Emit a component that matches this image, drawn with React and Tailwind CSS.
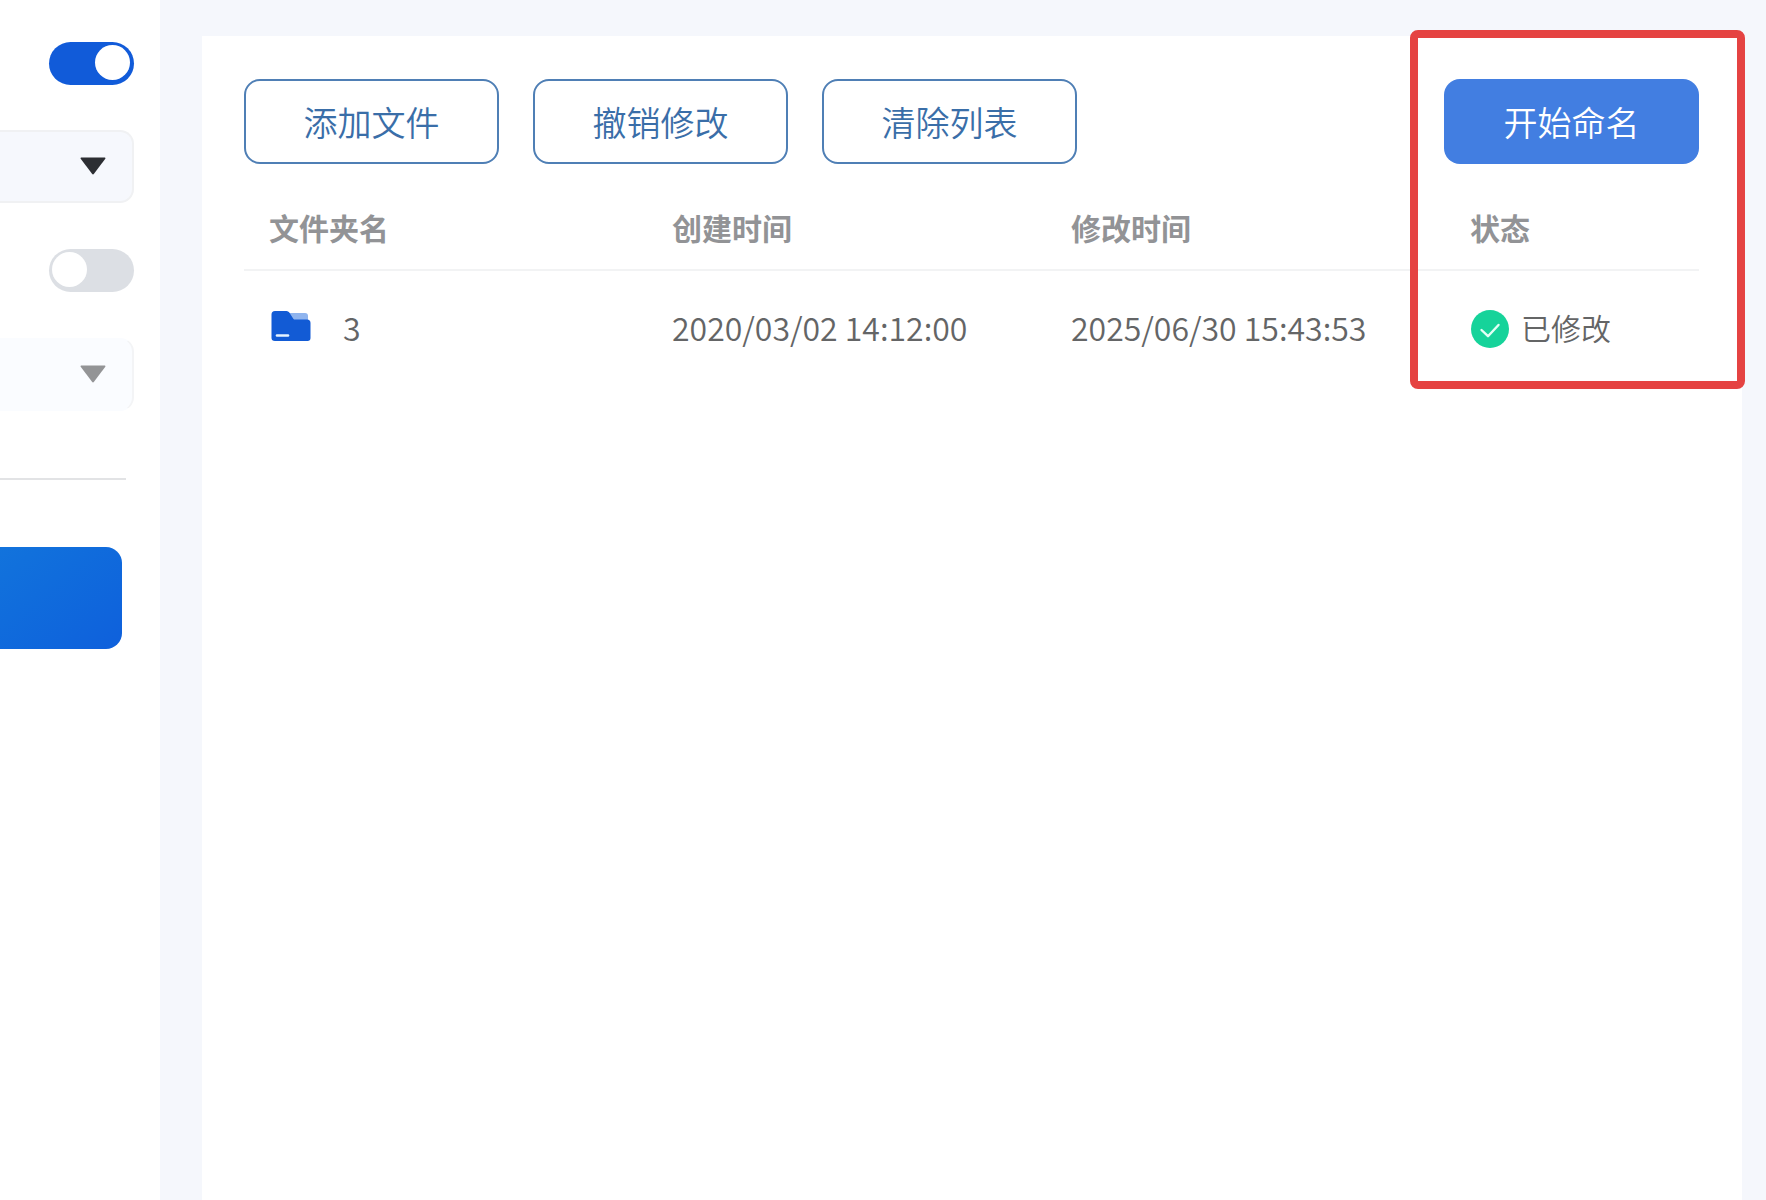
import React from "react";

function Toggle({ label, defaultChecked }) {
  return (
    <label className="relative block h-[43px] w-[85px]">
      <input
        type="checkbox"
        role="switch"
        aria-label={label}
        defaultChecked={defaultChecked}
        className="peer block h-full w-full appearance-none rounded-full bg-[#dcdfe4] checked:bg-[#115bd9]"
      />
      <span className="pointer-events-none absolute top-[3px] left-[3px] size-[35px] rounded-full bg-white peer-checked:left-[46px]" />
    </label>
  );
}

function Dropdown({ label, disabled }) {
  return (
    <div className="relative w-full">
      <select
        aria-label={label}
        disabled={disabled}
        className={
          disabled
            ? "block h-[73px] w-full appearance-none rounded-r-[14px] border-y border-r-2 border-y-[#fafcff] border-r-[#f3f4f6] bg-[#fafcff]"
            : "block h-[73px] w-full appearance-none rounded-r-[14px] border-2 border-l-0 border-[#f0f1f3] bg-[#f6f8fd]"
        }
      />
      <svg
        viewBox="0 0 26 18"
        className={
          disabled
            ? "pointer-events-none absolute top-[27px] right-7 h-[18px] w-[26px] text-[#939496]"
            : "pointer-events-none absolute top-[27px] right-7 h-[18px] w-[26px] text-[#2c2e33]"
        }
        aria-hidden="true"
      >
        <path d="M1.2 .5h23.6q1.2 .2 .5 1.3L14 16.8q-1 1.2-2 0L.7 1.8Q0 .7 1.2 .5Z" fill="currentColor" />
      </svg>
    </div>
  );
}

function OutlineButton({ children }) {
  return (
    <button
      type="button"
      className="h-[85px] w-[255px] rounded-2xl border-2 border-[#4f7fb5] bg-white text-[34px] leading-none font-[350] text-[#3a6ea8]"
    >
      {children}
    </button>
  );
}

function FolderIcon() {
  return (
    <svg viewBox="0 0 40 36" className="h-9 w-10" aria-hidden="true">
      <path d="M18 2h16q3 0 3 3v8H18Z" fill="#8fb4ee" />
      <path
        d="M4 0h11.500q1.800 0 2.800 1.500l4 6.200q.6 .9 1.800 .9H36q3.500 0 3.500 3.500V27q0 3-3 3H4q-3.500 0-3.500-3V3.500Q.5 0 4 0Z"
        fill="#125bd5"
      />
      <path d="M6 24.500h11" stroke="#e6f4ff" strokeWidth="2.600" strokeLinecap="round" />
    </svg>
  );
}

function CheckIcon() {
  return (
    <svg viewBox="0 0 38 38" className="size-[38px]" aria-hidden="true">
      <circle cx="19" cy="19" r="19" fill="#16d39a" />
      <path
        d="M10.500 20l6.500 6.200L27.500 15"
        fill="none"
        stroke="#e3fff5"
        strokeWidth="2.400"
        strokeLinecap="round"
        strokeLinejoin="round"
      />
    </svg>
  );
}

const files = [
  { name: "3", created: "2020/03/02 14:12:00", modified: "2025/06/30 15:43:53", status: "已修改" },
];

export default function App() {
  return (
    <div className="flex min-h-screen bg-[#f5f7fc] font-['Noto_Sans_CJK_SC',sans-serif]">
      <aside className="flex w-40 shrink-0 flex-col items-end bg-white pt-[42px] pr-[26px]">
        <Toggle label="启用选项一" defaultChecked />
        <div className="mt-[45px] w-full">
          <Dropdown label="选项一" />
        </div>
        <div className="mt-[46px]">
          <Toggle label="启用选项二" />
        </div>
        <div className="mt-[46px] w-full">
          <Dropdown label="选项二" disabled />
        </div>
        <div className="w-full pt-[67px] pr-2">
          <hr className="border-t-2 border-[#e2e3e5]" />
        </div>
        <div className="w-full pt-[67px] pr-3">
          <button
            type="button"
            aria-label="应用"
            className="block h-[102px] w-full rounded-r-2xl bg-linear-to-br from-[#1273dc] to-[#0f60dc]"
          />
        </div>
      </aside>

      <main className="flex min-w-0 grow pt-9 pr-6 pl-[42px]">
        <section className="relative grow bg-white pt-[43px] pr-[43px] pl-[42px]">
          <div className="flex items-center justify-between">
            <div className="flex gap-[34px]">
              <OutlineButton>添加文件</OutlineButton>
              <OutlineButton>撤销修改</OutlineButton>
              <OutlineButton>清除列表</OutlineButton>
            </div>
            <button
              type="button"
              className="h-[85px] w-[255px] rounded-2xl bg-[#427ee1] text-[34px] leading-none font-[350] text-white"
            >
              开始命名
            </button>
          </div>

          <table className="mt-6 w-full table-fixed border-collapse text-left text-[30px] leading-9">
            <colgroup>
              <col className="w-[403px]" />
              <col className="w-[399px]" />
              <col className="w-[399px]" />
              <col className="w-[254px]" />
            </colgroup>
            <thead>
              <tr className="h-[82px] border-b-2 border-[#f2f3f4] text-[#929396]">
                <th className="pb-1 pl-[25px] font-bold">文件夹名</th>
                <th className="pb-1 pl-[25px] font-bold">创建时间</th>
                <th className="pb-1 pl-[25px] font-bold">修改时间</th>
                <th className="pb-1 pl-[25px] font-bold">状态</th>
              </tr>
            </thead>
            <tbody>
              {files.map((file) => (
                <tr key={file.name} className="h-[117px] font-[350] whitespace-nowrap text-[#646566]">
                  <td className="pl-[27px] text-[32px]">
                    <div className="flex items-center gap-8">
                      <FolderIcon />
                      <span className="pb-1">{file.name}</span>
                    </div>
                  </td>
                  <td className="pb-1 pl-[25px] text-[32px]">{file.created}</td>
                  <td className="pb-1 pl-[25px] text-[32px]">{file.modified}</td>
                  <td className="pl-[26px]">
                    <div className="flex items-center gap-3">
                      <CheckIcon />
                      <span className="pb-1">{file.status}</span>
                    </div>
                  </td>
                </tr>
              ))}
            </tbody>
          </table>

          <div className="pointer-events-none absolute -top-[6px] -right-[3px] h-[359px] w-[335px] rounded-lg border-8 border-[#e54342]" />
        </section>
      </main>
    </div>
  );
}
